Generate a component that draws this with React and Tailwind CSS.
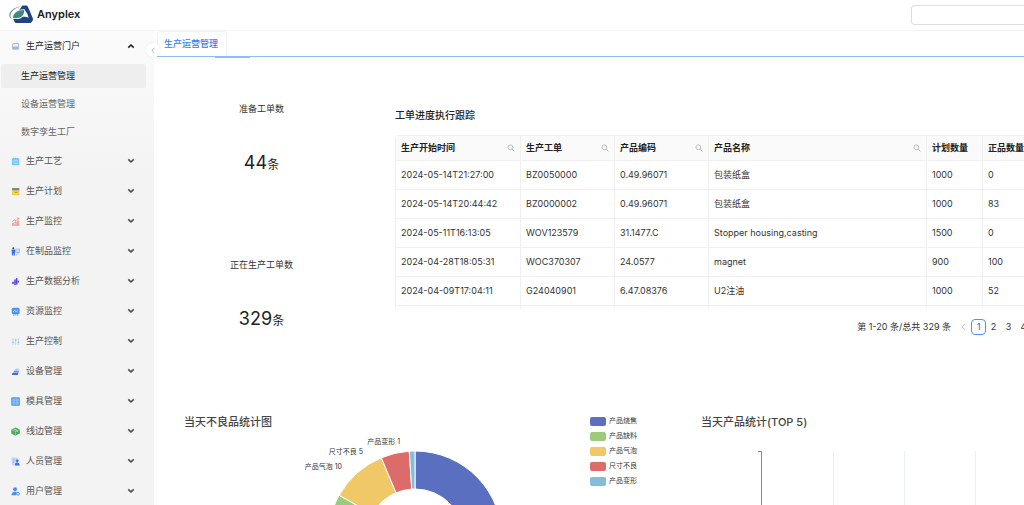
const Chevron = ({ up }) => (
  <svg viewBox="0 0 8 6" className="h-[6px] w-2 shrink-0" fill="none" stroke={up ? "#1f1f1f" : "#4a4a4a"} strokeWidth="1.6">
    <path d={up ? "M1.3 4.6 4 2l2.7 2.6" : "M1.3 1.4 4 4l2.7-2.6"} />
  </svg>
);

const icons = {
  portal: (
    <>
      <rect x="1.5" y="1.6" width="6.2" height="5.6" rx="0.6" fill="#e6edf6" stroke="#a3a9b6" strokeWidth="0.8" />
      <path d="M1.9 4.8h5.4v2.1H1.900z" fill="#86b5ee" />
    </>
  ),
  craft: (
    <>
      <rect x="1" y="1.2" width="7.2" height="7" rx="0.8" fill="#74c6f7" />
      <path d="M2.2 3.4h4.8M2.2 5h4.8M2.2 6.6h4.8" stroke="#c4e8fc" strokeWidth="0.6" />
      <path d="M2.6 0.8v1.2M4.6 0.8v1.2M6.6 0.8v1.2" stroke="#4fb0ea" strokeWidth="0.6" />
    </>
  ),
  plan: (
    <>
      <rect x="1" y="1" width="7.4" height="7.2" rx="0.8" fill="#f0d048" />
      <path d="M1 1.8a.8.8 0 0 1 .8-.8h5.800a.8.8 0 0 1 .8.8v1.500H1z" fill="#6b8f99" />
      <path d="M3.600 5.400h2.800" stroke="#a98a1c" strokeWidth="0.7" />
    </>
  ),
  monitor: (
    <g fill="none" stroke="#f58a75" strokeWidth="0.8">
      <path d="M1.600 8.200V6.200h1.200v2M4 8.200V5h1.200v3.200M6.500 8.200V3.800h1.200v4.400M1 8.200h7.500" />
      <path d="M1.200 4.600 3.400 3l1.400.8 2.800-2.600M6 1h1.800v1.600" />
    </g>
  ),
  wip: (
    <>
      <circle cx="2.300" cy="1.200" r="1" fill="#3c3f55" />
      <path d="M0.600 2.400h3.200l1.200 2-1 .4v3.800H2.700V6.500H2.200v2.100H0.900z" fill="#3b73e0" />
      <rect x="4.800" y="2" width="4" height="3.600" fill="#c9dcfa" stroke="#7fa6ee" strokeWidth="0.5" />
      <path d="M5.200 8.800 6.800 5.600 8.400 7" fill="none" stroke="#7fa6ee" strokeWidth="0.6" />
    </>
  ),
  analysis: (
    <g stroke="#5448ee" strokeWidth="1.600" strokeLinecap="round">
      <path d="M2 5.200v1.200" />
      <path d="M4 3v4.400" />
      <path d="M5.700 1.800v5.200" />
      <path d="M7.300 4.200v.8" />
    </g>
  ),
  resource: (
    <>
      <rect x="0.800" y="0.800" width="7.800" height="6.400" rx="1.500" fill="#4c94f6" />
      <path d="M2 4.400h1l.8-1.400 1.200 2 .8-1.200h1.400" fill="none" stroke="#d5e6fd" strokeWidth="0.6" />
      <path d="M3 7.200 2.600 8.800M6.400 7.200l.4 1.600M4.700 7.200v1.200" stroke="#4c94f6" strokeWidth="0.8" />
    </>
  ),
  control: (
    <g stroke="#9fcbdc" strokeWidth="0.8">
      <path d="M2 1.400v6.400M4.700 1.400v6.400M7.400 1.400v6.400" />
      <path d="M1.400 5.400h1.200M4.100 3.200h1.200M6.800 5.400H8" stroke="#7ab2c8" />
    </g>
  ),
  device: (
    <>
      <path d="M4.200 1.800 8 1.200 7.200 4H3.600z" fill="#b9cdfb" />
      <path d="M3.200 3.800h5l-.6 1.600H2.200z" fill="#6f97f5" />
      <path d="M1.600 5.800h6l-1 2.200H.8z" fill="#3f6cf0" />
    </>
  ),
  mold: (
    <>
      <rect x="0.200" y="0.200" width="8.700" height="8.600" rx="1" fill="#4f9ff8" />
      <path d="M2 2.200h2v1.700H2zM5.200 2.200h2v1.700h-2zM2 5.200h2v1.700H2zM5.200 5.200h2v1.700h-2z" fill="none" stroke="#b9dafd" strokeWidth="0.6" />
    </>
  ),
  lineside: (
    <>
      <path d="M0.300 2.400 4.600.4l4.300 2v3.800L4.400 8.700.3 6.400z" fill="#49a862" />
      <path d="M0.600 2.800l3.800 1.600 4.200-1.700M4.400 4.400v4" fill="none" stroke="#c8e8cf" strokeWidth="0.5" />
      <path d="M2.400 1.800 6.400 3.600v1.200" fill="none" stroke="#e6f6e9" strokeWidth="0.7" />
    </>
  ),
  people: (
    <>
      <rect x="0.600" y="0.600" width="6.800" height="7.600" rx="0.500" fill="#c3d8fb" />
      <path d="M1.800 2.200h2M1.800 3.800h1.600M1.800 5.400h1.600" stroke="#7ea8f2" strokeWidth="0.6" />
      <circle cx="6.200" cy="3.800" r="1.400" fill="#3f76ea" />
      <path d="M3.800 8.500c0-2 1-2.900 2.400-2.900s2.500.9 2.500 2.900z" fill="#3f76ea" />
    </>
  ),
  user: (
    <>
      <circle cx="4" cy="2.300" r="2" fill="#4a8ff7" />
      <path d="M0.500 8.300c0-2.500 1.500-3.500 3.500-3.500 1 0 1.600.3 2 .7L5 8.300z" fill="#4a8ff7" />
      <circle cx="7" cy="6.800" r="1.400" fill="#f3f3f3" stroke="#4a8ff7" strokeWidth="0.900" />
    </>
  ),
};

const Icon = ({ name }) => (
  <svg viewBox="0 0 9 9" className="size-[9px] shrink-0" aria-hidden="true">{icons[name]}</svg>
);

const groups = [
  ["craft", "生产工艺"],
  ["plan", "生产计划"],
  ["monitor", "生产监控"],
  ["wip", "在制品监控"],
  ["analysis", "生产数据分析"],
  ["resource", "资源监控"],
  ["control", "生产控制"],
  ["device", "设备管理"],
  ["mold", "模具管理"],
  ["lineside", "线边管理"],
  ["people", "人员管理"],
  ["user", "用户管理"],
];

const MenuRow = ({ icon, label, open }) => (
  <button
    type="button"
    aria-expanded={!!open}
    className={`flex h-[30px] w-full items-center gap-[6px] pr-[19px] pl-[11px] ${open ? "text-[#222]" : "text-[#555]"}`}
  >
    <Icon name={icon} />
    <span className="flex-1 text-left">{label}</span>
    <Chevron up={open} />
  </button>
);

function Sidebar() {
  return (
    <aside className="w-[154px] shrink-0 bg-linear-to-b from-[#fbfbfb] via-[#f3f3f3] via-30% to-[#f3f3f3]">
      <nav>
        <MenuRow icon="portal" label="生产运营门户" open />
        <ul className="flex flex-col gap-1 pt-[3px] pr-2 pb-[2px] pl-px">
          {["生产运营管理", "设备运营管理", "数字孪生工厂"].map((t, i) => (
            <li key={t}>
              <a
                href="#"
                className={`flex h-6 items-center rounded-xs pl-5 ${i === 0 ? "bg-[#eeeeee] text-[#222]" : "text-[#666]"}`}
              >
                {t}
              </a>
            </li>
          ))}
        </ul>
        {groups.map(([icon, label]) => (
          <MenuRow key={icon} icon={icon} label={label} />
        ))}
      </nav>
    </aside>
  );
}

const Logo = () => (
  <svg viewBox="0 0 24 19" className="h-[19px] w-6 shrink-0" aria-hidden="true">
    <path d="M12.500 1.800C12.800.9 13.500.4 14.600.4h2.200c1 0 1.700.4 2.100 1.300l4.900 11.600c.4 1 .2 1.700-.3 2.500l-.8 1.300c-.4.600-.9.900-1.600.9H7.300c-.8 0-1.300-.3-1.700-.9L4.300 14.200z" fill="#1f4484" />
    <path d="M14.600 4.600c2.300 1.300 4.300 4.300 5 8.200-2-1-4.300-1.300-6.600-.6z" fill="#fff" />
    <path d="M3.400 13.600C3.200 8 8.200 4 15.800 4.400 16.800 10.500 12 15.800 3.400 13.600z" fill="#fff" />
    <path d="M4 12.900C4 8.400 8.400 4.900 15.100 5.100 15.800 10.300 11.400 14.700 4 12.900z" fill="#3f8a7d" />
    <path d="M12 1.500C5.500 2 .2 5.900.2 10.200c0 1.900 1 3.200 3 3.900-1.200-1.100-1.700-2.200-1.600-3.600C1.800 6.800 5.800 3.200 12 1.500z" fill="#6fa898" />
  </svg>
);

const SearchIcon = () => (
  <svg viewBox="0 0 8 8" className="size-2 shrink-0" fill="none" stroke="#b5b5b5" strokeWidth="0.900" aria-hidden="true">
    <circle cx="3.300" cy="3.300" r="2.400" />
    <path d="M5.100 5.100 7.400 7.400" />
  </svg>
);

const columns = [
  ["生产开始时间", true, "w-[125px]"],
  ["生产工单", true, "w-[94px]"],
  ["产品编码", true, "w-[94px]"],
  ["产品名称", true, "w-[218px]"],
  ["计划数量", false, "w-[56px]"],
  ["正品数量", false, "w-[64px]"],
];

const rows = [
  ["2024-05-14T21:27:00", "BZ0050000", "0.49.96071", "包装纸盒", "1000", "0"],
  ["2024-05-14T20:44:42", "BZ0000002", "0.49.96071", "包装纸盒", "1000", "83"],
  ["2024-05-11T16:13:05", "WOV123579", "31.1477.C", "Stopper housing,casting", "1500", "0"],
  ["2024-04-28T18:05:31", "WOC370307", "24.0577", "magnet", "900", "100"],
  ["2024-04-09T17:04:11", "G24040901", "6.47.08376", "U2注油", "1000", "52"],
  ["", "", "", "", "", ""],
];

function OrderTable() {
  return (
    <section className="w-[651px] shrink-0 pt-[50px]">
      <h2 className="text-[10px] leading-4 font-medium text-[#222]">工单进度执行跟踪</h2>
      <div className="mt-3 h-[174px] overflow-hidden rounded-tl">
        <table className="w-full table-fixed border-separate border-spacing-0 rounded-tl border-t border-l border-[#f0f0f0] text-left text-[#333]">
          <thead>
            <tr>
              {columns.map(([name, search, width]) => (
                <th key={name} className={`${width} h-[25px] border-r border-b border-[#f0f0f0] bg-[#fafafa] px-[5px] py-0 font-semibold text-[#222]`}>
                  <span className="flex items-center justify-between whitespace-nowrap">
                    {name}
                    {search && <SearchIcon />}
                  </span>
                </th>
              ))}
            </tr>
          </thead>
          <tbody>
            {rows.map((row, r) => (
              <tr key={r}>
                {row.map((cell, c) => (
                  <td key={c} className="h-[29px] border-r border-b border-[#f0f0f0] px-[5px] py-0 whitespace-nowrap">
                    {cell}
                  </td>
                ))}
              </tr>
            ))}
          </tbody>
        </table>
      </div>
      <div className="mt-[10px] flex items-center justify-end text-[#333]">
        <span className="mr-[5px]">第 1-20 条/总共 329 条</span>
        <button type="button" aria-label="上一页" className="flex h-4 w-[15px] items-center justify-center">
          <svg viewBox="0 0 5 8" className="h-2 w-[5px]" fill="none" stroke="#bbb" strokeWidth="0.900"><path d="M4.300 1 1 4l3.300 3" /></svg>
        </button>
        {[1, 2, 3, 4].map((n) => (
          <button
            key={n}
            type="button"
            className={`h-4 w-[15px] rounded ${n === 1 ? "border border-[#4a94f8] font-medium text-[#2f80f5]" : ""}`}
          >
            {n}
          </button>
        ))}
        <button type="button" aria-label="下一页" className="flex h-4 w-[15px] items-center justify-center">
          <svg viewBox="0 0 5 8" className="h-2 w-[5px]" fill="none" stroke="#555" strokeWidth="0.900"><path d="M.7 1 4 4 .7 7" /></svg>
        </button>
      </div>
    </section>
  );
}

const Stat = ({ label, value }) => (
  <div className="flex flex-col items-center gap-[33px]">
    <h3 className="leading-[14px] text-[#333]">{label}</h3>
    <p className="text-lg leading-7 text-[#222]">
      {value}
      <span className="text-xs">条</span>
    </p>
  </div>
);

const slices = [
  { name: "产品烧焦", value: 49, fill: "#5a6fc0", swatch: "bg-[#5a6fc0]" },
  { name: "产品缺料", value: 30, fill: "#9ccb7c", swatch: "bg-[#9ccb7c]" },
  { name: "产品气泡", value: 10, fill: "#f1c867", swatch: "bg-[#f1c867]" },
  { name: "尺寸不良", value: 5, fill: "#dd6b69", swatch: "bg-[#dd6b69]" },
  { name: "产品变形", value: 1, fill: "#84bcdb", swatch: "bg-[#84bcdb]" },
];

function Donut() {
  const [cx, cy, R, r] = [231, 108, 87, 49];
  const total = slices.reduce((sum, s) => sum + s.value, 0);
  const at = (a, rad) => `${cx + rad * Math.sin(a)} ${cy - rad * Math.cos(a)}`;
  let angle = 0;
  return (
    <svg viewBox="0 0 406 200" className="block h-[200px] w-full" role="img" aria-label="当天不良品统计图">
      {slices.map(({ name, value, fill }) => {
        const a = angle;
        const b = (angle += (value / total) * Math.PI * 2);
        const big = b - a > Math.PI ? 1 : 0;
        return (
          <path
            key={name}
            d={`M${at(a, R)}A${R} ${R} 0 ${big} 1 ${at(b, R)}L${at(b, r)}A${r} ${r} 0 ${big} 0 ${at(a, r)}Z`}
            fill={fill}
            stroke="#fff"
            strokeWidth="1"
          />
        );
      })}
      <g fontSize="7" fill="#333" textAnchor="end">
        <text x="216" y="14">产品变形 1</text>
        <text x="179" y="24">尺寸不良 5</text>
        <text x="158" y="39">产品气泡 10</text>
      </g>
    </svg>
  );
}

function Charts() {
  return (
    <div className="mt-[79px] grid min-w-[1034px] grid-cols-2">
      <section className="flex items-start pl-[30px]">
        <div className="w-[406px] shrink-0">
          <h2 className="text-[11px] leading-4 font-medium text-[#444]">当天不良品统计图</h2>
          <Donut />
        </div>
        <ul className="text-[7px] text-[#333]">
          {slices.map(({ name, swatch }) => (
            <li key={name} className="flex h-[15px] items-center gap-[3px]">
              <span className={`h-[9px] w-4 rounded-xs ${swatch}`} />
              {name}
            </li>
          ))}
        </ul>
      </section>
      <section className="pl-[30px]">
        <h2 className="text-[11px] leading-4 font-medium text-[#444]">当天产品统计(TOP 5)</h2>
        <svg viewBox="0 0 400 200" className="block h-[200px] w-[400px]" role="img" aria-label="当天产品统计(TOP 5)">
          <path d="M132.500 21v179M203.500 21v179M274.500 21v179M345.500 21v179" stroke="#e9edf4" />
          <path d="M57 21.500h3.500V200" fill="none" stroke="#85878c" />
        </svg>
      </section>
    </div>
  );
}

export default function App() {
  return (
    <div className="flex h-screen flex-col overflow-hidden bg-white font-[Inter,'Noto_Sans_CJK_SC',sans-serif] text-[9px]">
      <header className="flex h-[31px] shrink-0 items-center justify-between border-b border-[#f3f3f3] pl-[9px]">
        <div className="flex items-center gap-1 pb-[2px]">
          <Logo />
          <span className="text-[11px] font-semibold text-[#222]">Anyplex</span>
        </div>
        <input type="search" aria-label="搜索" className="h-5 w-[113px] rounded-l border border-r-0 border-[#dedede] bg-white px-2 outline-none" />
      </header>
      <div className="flex min-h-0 flex-1">
        <Sidebar />
        <main className="relative min-w-0 flex-1">
          <button
            type="button"
            aria-label="收起菜单"
            className="absolute top-3 -left-2 z-10 flex size-[14px] items-center justify-center rounded-full bg-white shadow-[0_0_3px_rgba(0,0,0,0.08)]"
          >
            <svg viewBox="0 0 5 8" className="h-[7px] w-1" fill="none" stroke="#999" strokeWidth="1"><path d="M4.300 1 1 4l3.300 3" /></svg>
          </button>
          <div className="h-full overflow-hidden">
            <div className="relative ml-[3px] border-b border-[#8fbcf8]" role="tablist">
              <button type="button" role="tab" aria-selected="true" className="block h-[25px] w-[70px] rounded-t border-x border-t border-[#f2f2f2] pl-[6px] text-left font-medium whitespace-nowrap text-[#2f80f5]">
                生产运营管理
              </button>
              <span className="absolute -bottom-px left-[58px] h-[2px] w-[35px] translate-y-px bg-[#8fbcf8]" />
            </div>
            <div className="flex">
              <div className="mr-[26px] flex w-[215px] shrink-0 flex-col gap-[81px] pt-[45px]">
                <Stat label="准备工单数" value="44" />
                <Stat label="正在生产工单数" value="329" />
              </div>
              <OrderTable />
            </div>
            <Charts />
          </div>
        </main>
      </div>
    </div>
  );
}
